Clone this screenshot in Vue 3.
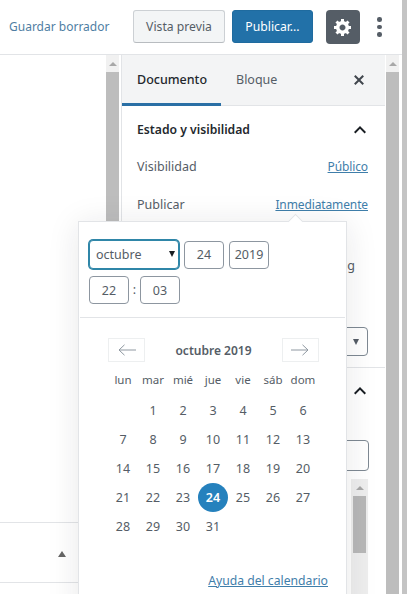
<script setup>
const weekdays = ['lun', 'mar', 'mié', 'jue', 'vie', 'sáb', 'dom']
const blanks = 1
const days = Array.from({ length: 31 }, (_, i) => i + 1)
const selected = 24
</script>

<template>
  <div class="page">
    <div class="window">
      <header class="topbar">
        <a class="save-link">Guardar borrador</a>
        <button class="btn btn-preview" type="button">Vista previa</button>
        <button class="btn btn-publish" type="button">Publicar...</button>
        <button class="gear" type="button" aria-label="Ajustes">
          <svg width="20" height="20" viewBox="0 0 20 20" fill="#fff">
            <path d="M18 12h-2.18c-.17.7-.44 1.35-.81 1.93l1.54 1.54-2.1 2.1-1.54-1.54c-.58.36-1.23.63-1.91.79V19H8v-2.18c-.68-.16-1.33-.43-1.91-.79l-1.54 1.54-2.12-2.12 1.54-1.54c-.36-.58-.63-1.23-.79-1.91H1V9.03h2.17c.16-.7.44-1.35.8-1.94L2.43 5.55l2.1-2.1 1.54 1.54c.58-.37 1.24-.64 1.93-.81V2h3v2.18c.68.16 1.33.43 1.91.79l1.54-1.54 2.12 2.12-1.54 1.54c.36.59.64 1.24.8 1.94H18V12zm-8.5 1.5c1.66 0 3-1.34 3-3s-1.34-3-3-3-3 1.34-3 3 1.34 3 3 3z" />
          </svg>
        </button>
        <div class="dots" aria-hidden="true"><i></i><i></i><i></i></div>
      </header>

      <div class="body">
        <main class="editor">
          <div class="editor-fill"></div>
          <div class="editor-row"><span class="tri-up"></span></div>
        </main>

        <div class="scrollbar">
          <span class="scroll-arrow"><span class="tri-up tri-light"></span></span>
          <span class="scroll-thumb"></span>
        </div>

        <aside class="sidebar">
          <div class="tabs">
            <span class="tab tab-active">Documento</span>
            <span class="tab">Bloque</span>
            <svg class="close" width="20" height="20" viewBox="0 0 20 20" fill="#40464d">
              <path d="M14.95 6.46L11.41 10l3.54 3.54-1.41 1.41L10 11.42l-3.53 3.53-1.42-1.42L8.58 10 5.05 6.47l1.42-1.42L10 8.58l3.54-3.53z" />
            </svg>
          </div>

          <section class="panel panel-status">
            <div class="panel-title">
              <span>Estado y visibilidad</span>
              <svg width="24" height="24" viewBox="0 0 24 24" fill="#191e23"><path d="M12 8l-6 6 1.41 1.41L12 10.83l4.59 4.58L18 14z" /></svg>
            </div>
            <div class="rows">
              <div class="row"><span>Visibilidad</span><a>Público</a></div>
              <div class="row"><span>Publicar</span><a>Inmediatamente</a></div>
              <div class="row row-sticky"><span>Fijar en el blog</span></div>
            </div>
            <div class="author-select"><span class="tri-down"></span></div>
          </section>

          <section class="panel">
            <div class="panel-title panel-title-second">
              <svg width="24" height="24" viewBox="0 0 24 24" fill="#191e23"><path d="M12 8l-6 6 1.41 1.41L12 10.83l4.59 4.58L18 14z" /></svg>
            </div>
            <div class="search-box"></div>
            <div class="mini-scroll">
              <span class="mini-arrow"><span class="tri-up tri-light"></span></span>
              <span class="mini-thumb"></span>
            </div>
          </section>
        </aside>

        <div class="scrollbar scrollbar-side">
          <span class="scroll-arrow"><span class="tri-up tri-light"></span></span>
          <span class="scroll-thumb"></span>
        </div>
      </div>
    </div>
    <div class="page-scroll"></div>

    <div class="popover">
      <span class="popover-tip"></span>
      <div class="time-picker">
        <div class="field-row">
          <div class="month-select">
            <select>
              <option>octubre</option>
            </select>
            <span class="tri-down tri-dark"></span>
          </div>
          <input class="num" value="24" />
          <input class="num" value="2019" />
        </div>
        <div class="field-row field-row-time">
          <input class="num" value="22" />
          <span class="colon">:</span>
          <input class="num" value="03" />
        </div>
      </div>

      <div class="calendar">
        <div class="cal-head">
          <span class="nav">
            <svg width="20" height="12" viewBox="0 0 20 12" fill="none" stroke="#8f98a1" stroke-width="1"><path d="M19 6H2M7.500 .8 2 6l5.500 5.200" /></svg>
          </span>
          <strong>octubre 2019</strong>
          <span class="nav">
            <svg width="20" height="12" viewBox="0 0 20 12" fill="none" stroke="#8f98a1" stroke-width="1"><path d="M1 6h17M12.500 .8 18 6l-5.500 5.200" /></svg>
          </span>
        </div>
        <div class="cal-grid">
          <span v-for="w in weekdays" :key="w" class="weekday">{{ w }}</span>
          <span v-for="n in blanks" :key="'b' + n" class="day"></span>
          <span v-for="d in days" :key="d" class="day" :class="{ 'day-selected': d === selected }">{{ d }}</span>
        </div>
        <a class="help">Ayuda del calendario</a>
      </div>
    </div>
  </div>
</template>

<style scoped>
.page {
  position: relative;
  display: flex;
  width: 407px;
  height: 594px;
  overflow: hidden;
  background: #fff;
  color: #555d66;
  font-family: "Noto Sans", "Open Sans", sans-serif;
  font-size: 12.500px;
}

.window {
  flex: 1;
  min-width: 0;
  display: flex;
  flex-direction: column;
}

.page-scroll {
  width: 5px;
  background: #c4c4c4;
}

.topbar {
  flex: none;
  height: 55px;
  display: flex;
  align-items: flex-start;
  padding: 10px 0 0 9px;
  border-bottom: 1px solid #e2e4e7;
  box-sizing: border-box;
}

.save-link {
  width: 124px;
  margin-top: 8px;
  color: #4f7ea3;
  font-size: 12px;
  white-space: nowrap;
}

.btn {
  height: 33px;
  padding: 0;
  border-radius: 3px;
  font: inherit;
  font-size: 12.200px;
  box-sizing: border-box;
}

.btn-preview {
  width: 92px;
  margin-right: 7px;
  border: 1px solid #ccd0d4;
  border-bottom-color: #b8bcc0;
  background: #f3f5f6;
  color: #555d66;
}

.btn-publish {
  width: 81px;
  margin-right: 13px;
  border: 1px solid #1f6b9f;
  background: #2271a8;
  color: #fff;
}

.gear {
  width: 34px;
  height: 34px;
  padding: 0;
  display: flex;
  align-items: center;
  justify-content: center;
  border: 0;
  border-radius: 4px;
  background: #555d66;
}

.dots {
  margin: 7px 0 0 17px;
  display: flex;
  flex-direction: column;
  gap: 3px;
}

.dots i {
  display: block;
  width: 4.500px;
  height: 4.500px;
  border-radius: 50%;
  background: #555d66;
}

.body {
  flex: 1;
  min-height: 0;
  display: flex;
}

.editor {
  width: 106px;
  display: flex;
  flex-direction: column;
  background: #fff;
}

.editor-fill {
  height: 467px;
}

.editor-row {
  height: 61px;
  display: flex;
  align-items: center;
  justify-content: flex-end;
  padding: 3px 40px 0 0;
  border-top: 1px solid #e2e4e7;
  border-bottom: 1px solid #e2e4e7;
  box-sizing: border-box;
}

.scrollbar {
  flex: none;
  width: 13px;
  display: flex;
  flex-direction: column;
}

.scrollbar-side {
  margin-left: 1px;
  margin-right: 3px;
}

.scroll-arrow {
  height: 17px;
  display: flex;
  align-items: center;
  justify-content: center;
  background: #f1f1f1;
}

.scroll-thumb {
  flex: 1;
  background: #bdbdbd;
}

.tri-up {
  width: 0;
  height: 0;
  border-left: 4px solid transparent;
  border-right: 4px solid transparent;
  border-bottom: 6px solid #666;
}

.tri-light {
  border-bottom: 4px solid #a8a8a8;
}

.tri-down {
  width: 0;
  height: 0;
  border-left: 3.500px solid transparent;
  border-right: 3.500px solid transparent;
  border-top: 6px solid #555d66;
}

.tri-dark {
  border-top-color: #191e23;
}

.sidebar {
  width: 264px;
  margin-left: 2px;
  border-left: 1px solid #e2e4e7;
  box-sizing: border-box;
  display: flex;
  flex-direction: column;
  background: #fff;
}

.tabs {
  flex: none;
  height: 51px;
  display: flex;
  align-items: stretch;
  position: relative;
  background: #f3f4f5;
  border-bottom: 1px solid #e2e4e7;
  box-sizing: border-box;
}

.tab {
  display: flex;
  align-items: center;
  padding: 0 15px;
  color: #555d66;
  box-sizing: border-box;
  border-bottom: 3px solid transparent;
  margin-bottom: -1px;
}

.tab-active {
  width: 99px;
  color: #23282d;
  font-weight: 500;
  border-bottom-color: #2a6fa5;
}

.close {
  position: absolute;
  top: 15px;
  right: 16px;
}

.panel {
  padding: 0 17px 0 15px;
}

.panel-status {
  flex: none;
  height: 262px;
  box-sizing: border-box;
  border-bottom: 1px solid #e2e4e7;
}

.panel-title {
  height: 47px;
  display: flex;
  align-items: center;
  justify-content: space-between;
  color: #23282d;
  font-weight: 600;
  font-size: 12.200px;
}

.panel-title svg {
  margin-right: -4px;
}

.rows {
  margin-top: -6px;
}

.row {
  height: 38px;
  display: flex;
  align-items: center;
  justify-content: space-between;
}

.row a {
  color: #3f7eaa;
  text-decoration: underline;
  font-size: 12px;
  letter-spacing: -0.12px;
}

.row-sticky {
  margin-top: 23px;
  justify-content: flex-end;
  padding-right: 13px;
}

.author-select {
  width: 60px;
  height: 29px;
  margin: 43px 0 0 auto;
  display: flex;
  align-items: center;
  justify-content: flex-end;
  padding-right: 8px;
  border: 1px solid #7e8993;
  border-radius: 4px;
  box-sizing: border-box;
}

.panel-title-second {
  height: 46px;
  justify-content: flex-end;
}

.search-box {
  width: calc(100% + 1px);
  height: 31px;
  margin-top: 26px;
  border: 1px solid #7e8993;
  border-radius: 4px;
  box-sizing: border-box;
}

.mini-scroll {
  width: 17px;
  height: 115px;
  margin: 8px 0 0 auto;
  padding: 0 2px;
  box-sizing: border-box;
  display: flex;
  flex-direction: column;
  background: #eeeeee;
}

.mini-arrow {
  height: 17px;
  display: flex;
  align-items: center;
  justify-content: center;
}

.mini-thumb {
  height: 57px;
  background: #b8b8b8;
}

.popover {
  position: absolute;
  left: 78px;
  top: 221px;
  width: 269px;
  height: 400px;
  box-sizing: border-box;
  background: #fff;
  border: 1px solid #e2e4e7;
  box-shadow: 0 3px 30px rgba(25, 30, 35, 0.1);
}

.popover-tip {
  position: absolute;
  top: -6px;
  left: 211px;
  width: 10px;
  height: 10px;
  background: #fff;
  border-top: 1px solid #e2e4e7;
  border-left: 1px solid #e2e4e7;
  transform: rotate(45deg);
}

.time-picker {
  position: relative;
  margin: 0 1px;
  padding: 18px 9px 13px;
  border-bottom: 1px solid #e2e4e7;
}

.field-row {
  display: flex;
  align-items: center;
  gap: 5px;
}

.field-row-time {
  margin-top: 7px;
  gap: 0;
}

.month-select {
  position: relative;
  width: 90px;
  height: 29px;
  display: flex;
  align-items: center;
}

.month-select .tri-down {
  position: absolute;
  right: 4px;
  top: 11px;
}

.month-select select {
  width: 100%;
  height: 100%;
  padding: 0 0 0 6px;
  appearance: none;
  background: #fff;
  border: 1px solid #2f86a8;
  border-radius: 4px;
  box-shadow: 0 0 0 1px #2f86a8;
  color: #555d66;
  font: inherit;
  font-size: 12.500px;
  box-sizing: border-box;
}

.num {
  width: 40px;
  height: 28px;
  padding: 0;
  border: 1px solid #8d96a0;
  border-radius: 4px;
  background: #fff;
  color: #555d66;
  font: inherit;
  font-size: 12.500px;
  text-align: center;
  box-sizing: border-box;
}

.colon {
  width: 11px;
  text-align: center;
  line-height: 28px;
}

.calendar {
  padding: 20px 27px 0 29px;
}

.cal-head {
  display: flex;
  align-items: center;
  justify-content: space-between;
  height: 24px;
  color: #555d66;
}

.cal-head strong {
  font-size: 12px;
  font-weight: 600;
}

.nav {
  width: 37px;
  height: 24px;
  display: flex;
  align-items: center;
  justify-content: center;
  border: 1px solid #edeff0;
  box-sizing: border-box;
}

.cal-grid {
  display: grid;
  grid-template-columns: repeat(7, 30px);
  grid-auto-rows: 29px;
  width: 210px;
  padding-top: 5px;
}

.weekday {
  height: 24px;
  display: flex;
  align-items: center;
  justify-content: center;
  font-size: 11.500px;
}

.day {
  display: flex;
  align-items: center;
  justify-content: center;
}

.day-selected {
  width: 30px;
  height: 29px;
  border-radius: 50%;
  background: #2581bd;
  color: #fff;
  font-weight: 600;
}

.help {
  display: block;
  margin: 31px -9px 0 0;
  text-align: right;
  color: #3f7eaa;
  text-decoration: underline;
  font-size: 12.200px;
}
</style>
